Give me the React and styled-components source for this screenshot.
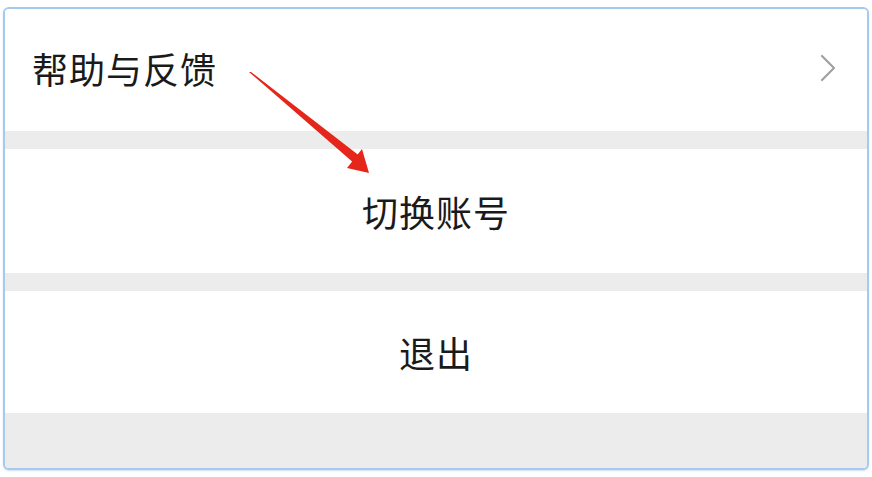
import * as React from "react";
import styled, { createGlobalStyle } from "styled-components";

const GlobalStyle = createGlobalStyle`
    html, body {
        margin: 0;
        padding: 0;
        background: #ffffff;
        font-family: "Noto Sans CJK SC", "Noto Sans", sans-serif;
    }
`;

function Chevron() {
    return (
        <svg width="18" height="28" viewBox="0 0 18 28">
            <path d="M3 2 L15 14 L3 26" fill="none" stroke="#a0a0a0" strokeWidth="2.2" strokeLinecap="round" strokeLinejoin="round" />
        </svg>
    );
}

function Arrow() {
    return (
        <ArrowSvg width="872" height="477" viewBox="0 0 872 477">
            <polygon points="249,72 251,72 361,157 355,164" fill="#e5261b" />
            <polygon points="369,173 362,149 347,168" fill="#e5261b" />
        </ArrowSvg>
    );
}

function App() {
    return (
        <>
            <GlobalStyle />
            <Page>
                <Card>
                    <Row lift>
                        <Label>帮助与反馈</Label>
                        <Chevron />
                    </Row>
                    <Gap />
                    <Row center tall>
                        <Label>切换账号</Label>
                    </Row>
                    <Gap />
                    <Row center>
                        <Label>退出</Label>
                    </Row>
                    <Footer />
                </Card>
                <Arrow />
            </Page>
        </>
    );
}

export default App

const Page = styled.div`
    position: relative;
    width: 872px;
    height: 477px;
    padding: 7px 0 0 3px;
    box-sizing: border-box;
`;

const Card = styled.div`
    width: 866px;
    height: 463px;
    box-sizing: border-box;
    border: 2px solid #a6c9ee;
    border-radius: 6px;
    background: #ffffff;
    overflow: hidden;
    display: flex;
    flex-direction: column;
    box-shadow: 0 1px 2px rgba(120, 160, 210, 0.35);
`;

const Row = styled.div`
    height: ${p => (p.tall ? 124 : 122)}px;
    box-sizing: border-box;
    flex: none;
    display: flex;
    align-items: center;
    justify-content: ${p => (p.center ? "center" : "space-between")};
    padding: ${p => (p.center ? "0" : "0 30px 0 27px")};
    padding-bottom: ${p => (p.lift ? "5px" : "0")};
    background: #ffffff;
`;

const Label = styled.span`
    font-size: 36px;
    color: #1a1a1a;
    letter-spacing: 1px;
`;

const Gap = styled.div`
    height: 18px;
    flex: none;
    background: #ececec;
`;

const Footer = styled.div`
    flex: 1;
    background: #ececec;
`;

const ArrowSvg = styled.svg`
    position: absolute;
    top: 0;
    left: 0;
    pointer-events: none;
`;
